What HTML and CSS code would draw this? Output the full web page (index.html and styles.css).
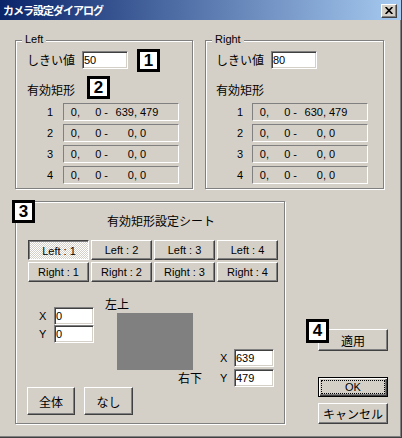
FILE: index.html
```html
<!DOCTYPE html>
<html lang="ja">
<head>
<meta charset="utf-8">
<title>カメラ設定ダイアログ</title>
<link rel="stylesheet" href="styles.css">
</head>
<body>
<div class="window">
  <div class="titlebar">
    <span class="title">カメラ設定ダイアログ</span>
    <span class="close"><svg width="8" height="7" viewBox="0 0 8 7"><path d="M0.6 0 L7.4 7 M7.4 0 L0.6 7" stroke="#000" stroke-width="1.7" fill="none"/></svg></span>
  </div>
  <div class="content">
    <div class="row-top">
      <div class="group g-side">
        <span class="legend">Left</span>
        <div class="thr"><span class="jp lbl">しきい値</span><span class="edit w46">50</span></div>
        <div class="jp sub">有効矩形</div>
        <div class="rects">
          <span class="num">1</span><span class="static"><span class="a">0,</span><span class="b">0 -</span><span class="c">639,</span><span class="d">479</span></span>
          <span class="num">2</span><span class="static"><span class="a">0,</span><span class="b">0 -</span><span class="c">0,</span><span class="d">0</span></span>
          <span class="num">3</span><span class="static"><span class="a">0,</span><span class="b">0 -</span><span class="c">0,</span><span class="d">0</span></span>
          <span class="num">4</span><span class="static"><span class="a">0,</span><span class="b">0 -</span><span class="c">0,</span><span class="d">0</span></span>
        </div>
        <span class="badge b1">1</span>
        <span class="badge b2">2</span>
      </div>
      <div class="group g-side g-right">
        <span class="legend">Right</span>
        <div class="thr"><span class="jp lbl">しきい値</span><span class="edit w46">80</span></div>
        <div class="jp sub">有効矩形</div>
        <div class="rects">
          <span class="num">1</span><span class="static"><span class="a">0,</span><span class="b">0 -</span><span class="c">630,</span><span class="d">479</span></span>
          <span class="num">2</span><span class="static"><span class="a">0,</span><span class="b">0 -</span><span class="c">0,</span><span class="d">0</span></span>
          <span class="num">3</span><span class="static"><span class="a">0,</span><span class="b">0 -</span><span class="c">0,</span><span class="d">0</span></span>
          <span class="num">4</span><span class="static"><span class="a">0,</span><span class="b">0 -</span><span class="c">0,</span><span class="d">0</span></span>
        </div>
      </div>
    </div>
    <div class="row-bot">
      <div class="group g3">
        <div class="jp sheet-title">有効矩形設定シート</div>
        <div class="btn-grid">
          <span class="btn pressed">Left : 1</span>
          <span class="btn">Left : 2</span>
          <span class="btn">Left : 3</span>
          <span class="btn">Left : 4</span>
          <span class="btn">Right : 1</span>
          <span class="btn">Right : 2</span>
          <span class="btn">Right : 3</span>
          <span class="btn">Right : 4</span>
        </div>
        <div class="lower">
          <div class="xy xy-a">
            <span class="xl">X</span><span class="edit">0</span>
            <span class="xl">Y</span><span class="edit">0</span>
          </div>
          <div class="preview">
            <div class="jp corner">左上</div>
            <div class="rect"></div>
            <div class="jp corner br">右下</div>
          </div>
          <div class="xy xy-c">
            <span class="xl">X</span><span class="edit">639</span>
            <span class="xl">Y</span><span class="edit">479</span>
          </div>
        </div>
        <div class="actions">
          <span class="btn jp big b-all">全体</span>
          <span class="btn jp big b-none">なし</span>
        </div>
        <span class="badge b3">3</span>
      </div>
      <div class="side">
        <span class="btn jp apply">適用</span>
        <span class="btn ok">OK</span>
        <span class="btn jp cancel">キャンセル</span>
        <span class="badge b4">4</span>
      </div>
    </div>
  </div>
</div>
</body>
</html>
```

FILE: styles.css
```css
* { box-sizing: border-box; }
html, body { margin: 0; padding: 0; }
body {
  width: 402px;
  height: 438px;
  overflow: hidden;
  background: #d4d0c8;
  color: #000;
  font-family: "Liberation Sans", "Noto Sans CJK JP", sans-serif;
  font-size: 11px;
}
.jp { font-family: "Noto Sans CJK JP", sans-serif; font-size: 12px; }

.window {
  width: 402px;
  height: 438px;
  border-right: 1px solid #404040;
  border-bottom: 1px solid #404040;
  box-shadow: inset -1px -1px #808080;
  display: flex;
  flex-direction: column;
}

.titlebar {
  flex: none;
  height: 20px;
  background: linear-gradient(to right, #0a246a, #a6caf0);
  display: flex;
  align-items: center;
  justify-content: space-between;
  padding: 0 4px 0 3px;
}
.title {
  color: #fff;
  font-family: "Noto Sans CJK JP", sans-serif;
  font-weight: bold;
  font-size: 11px;
  letter-spacing: -1px;
  line-height: 14px;
}
.close {
  width: 16px;
  height: 14px;
  margin-top: 1px;
  background: #d4d0c8;
  border: 1px solid;
  border-color: #fff #404040 #404040 #fff;
  box-shadow: inset -1px -1px #808080;
  display: flex;
  align-items: center;
  justify-content: center;
}

.content { flex: 1; padding-left: 15px; }

.row-top { display: flex; gap: 12px; margin-top: 20px; }

.group {
  position: relative;
  border: 1px solid #808080;
  box-shadow: inset 1px 1px #fff, 1px 1px #fff;
}
.g-side { width: 178px; height: 149px; padding: 10px 0 0 11px; }
.g-right { width: 179px; padding-left: 10px; }

.legend {
  position: absolute;
  top: -8px;
  left: 6px;
  padding: 0 3px;
  background: #d4d0c8;
  line-height: 13px;
}

.thr { display: flex; align-items: center; height: 18px; }
.lbl { width: 55px; line-height: 14px; }

.edit {
  display: block;
  height: 18px;
  background: #fff;
  border: 1px solid;
  border-color: #808080 #fff #fff #808080;
  box-shadow: inset 1px 1px #404040, inset -1px -1px #d4d0c8;
  padding: 0 0 0 1px;
  line-height: 16px;
  white-space: nowrap;
}
.w46 { width: 46px; }

.sub { margin-top: 14px; line-height: 14px; }

.rects {
  display: grid;
  grid-template-columns: 16px 116px;
  grid-auto-rows: 18px;
  row-gap: 3px;
  margin: 6px 0 0 20px;
}
.g-right .rects { margin-left: 21px; grid-template-columns: 15px 116px; }
.num { line-height: 18px; }
.static {
  height: 18px;
  border: 1px solid;
  border-color: #808080 #fff #fff #808080;
  display: flex;
  align-items: center;
  white-space: pre;
}
.static span { display: inline-block; text-align: right; }
.static .a { width: 16px; }
.static .b { width: 28px; }
.static .c { width: 29px; }
.static .d { text-align: left; padding-left: 3px; }

.badge {
  position: absolute;
  width: 23px;
  height: 23px;
  background: #fff;
  border: 3px solid #000;
  font: bold 17px/17px "Liberation Sans", sans-serif;
  text-align: center;
}
.b1 { left: 121px; top: 8px; }
.b2 { left: 71px; top: 35px; }
.b3 { left: -4px; top: -2px; }
.b4 { left: -12px; top: 118px; height: 24px; }

.row-bot { display: flex; align-items: flex-start; margin-top: 12px; }
.g3 { width: 270px; height: 223px; }

.sheet-title { margin-top: 12px; padding-left: 91px; line-height: 14px; }

.btn {
  background: #d4d0c8;
  border: 1px solid;
  border-color: #fff #404040 #404040 #fff;
  box-shadow: inset -1px -1px #808080;
  display: flex;
  align-items: center;
  justify-content: center;
  white-space: nowrap;
}
.btn-grid {
  display: grid;
  grid-template-columns: repeat(4, 61px);
  grid-auto-rows: 20px;
  gap: 2px;
  margin: 12px 0 0 12px;
}
.pressed {
  border-color: #404040 #fff #fff #404040;
  box-shadow: inset 1px 1px #808080;
  background-color: #fff;
  background-image: conic-gradient(#d4d0c8 25%, #fff 0 50%, #d4d0c8 0 75%, #fff 0);
  background-size: 2px 2px;
  padding: 1px 0 0 1px;
}

.lower { display: flex; align-items: flex-start; height: 105px; }
.xy { display: grid; grid-auto-rows: 18px; }
.xy-a { grid-template-columns: 15px 40px; margin: 25px 0 0 23px; }
.xy-c { grid-template-columns: 14px 40px; row-gap: 2px; margin: 67px 0 0 18px; }
.xl { line-height: 18px; }

.preview { width: 97px; margin: 15px 0 0 11px; }
.corner { line-height: 14px; }
.rect { width: 76px; height: 57px; background: #808080; margin: 2px 0 0 12px; }
.br { text-align: right; margin-top: 1px; }

.actions { display: flex; gap: 9px; margin-left: 11px; }
.big { height: 28px; }
.b-all { width: 48px; }
.b-none { width: 49px; }

.side {
  position: relative;
  width: 70px;
  margin-left: 33px;
  display: flex;
  flex-direction: column;
}
.apply { margin-top: 128px; height: 22px; }
.ok {
  position: relative;
  margin-top: 26px;
  height: 20px;
  border: 1px solid #000;
  box-shadow: inset 1px 1px #fff, inset -1px -1px #404040, inset -2px -2px #808080;
}
.ok::after {
  content: "";
  position: absolute;
  inset: 2px;
  border: 1px dotted #000;
}
.cancel { margin-top: 6px; height: 21px; }
```
